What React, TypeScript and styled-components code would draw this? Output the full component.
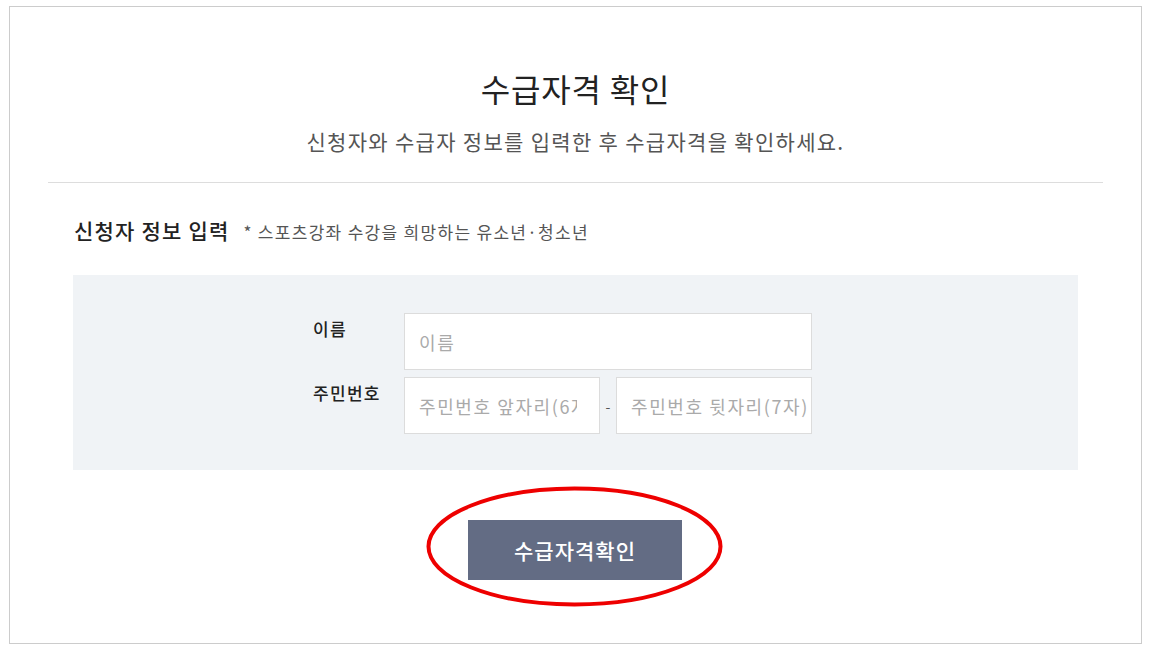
import React from "react";
import styled, { createGlobalStyle } from "styled-components";

const Global = createGlobalStyle`
  html, body { margin: 0; padding: 0; background: #fff; }
  body { font-family: "Noto Sans CJK KR", "Noto Sans", sans-serif; }
  * { box-sizing: border-box; }
`;

const Frame = styled.div`
  width: 1133px;
  height: 638px;
  margin: 6px 0 0 9px;
  border: 1px solid #cccccc;
  display: flex;
  flex-direction: column;
`;

const Header = styled.header`
  display: flex;
  flex-direction: column;
  align-items: center;
  padding-top: 60px;
  margin: 0 38px;
  padding-bottom: 26px;
  border-bottom: 1px solid #dddddd;
`;

const Title = styled.h1`
  margin: 0;
  font-size: 32px;
  line-height: 42px;
  font-weight: 400;
  letter-spacing: 0.8px;
  color: #222;
`;

const Subtitle = styled.p`
  margin: 17px 0 0;
  font-size: 21px;
  line-height: 30px;
  font-weight: 400;
  letter-spacing: 1.3px;
  color: #555;
`;

const Section = styled.section`
  padding: 34px 63px 0;
`;

const SectionHead = styled.div`
  display: flex;
  align-items: baseline;
  gap: 14px;
  padding-left: 1px;
  height: 26px;
`;

const SectionTitle = styled.h2`
  margin: 0;
  font-size: 21px;
  line-height: 26px;
  font-weight: 500;
  letter-spacing: 1.2px;
  color: #222;
`;

const Note = styled.span`
  font-size: 17px;
  letter-spacing: 1.3px;
  color: #555;
`;

const Panel = styled.div`
  margin-top: 32px;
  background: #f0f3f6;
  padding: 38px 0 36px 240px;
`;

const FormGrid = styled.div`
  display: grid;
  grid-template-columns: 91px 408px;
  row-gap: 7px;
`;

const Label = styled.label`
  font-size: 17px;
  font-weight: 500;
  letter-spacing: 1.3px;
  color: #222;
  line-height: 24px;
  padding-top: 4px;
`;

const Field = styled.input<{ $w?: number; $padR?: number }>`
  width: ${(p) => (p.$w ? `${p.$w}px` : "100%")};
  height: 57px;
  border: 1px solid #dcdcdc;
  background: #fff;
  padding: 0 ${(p) => p.$padR ?? 14}px 0 14px;
  font-family: inherit;
  font-size: 18px;
  letter-spacing: 1.6px;
  color: #333;
  outline: none;
  &::placeholder { color: #aaa; }
`;

const SplitRow = styled.div`
  display: flex;
  align-items: center;
`;

const Dash = styled.span`
  width: 17px;
  text-align: center;
  color: #555;
  font-size: 14px;
`;

const ButtonArea = styled.div`
  display: flex;
  justify-content: center;
  padding-top: 50px;
`;

const ButtonWrap = styled.div`
  position: relative;
  margin-left: -1px;
`;

const Button = styled.button`
  width: 214px;
  height: 60px;
  border: none;
  background: #636c84;
  color: #fff;
  font-family: inherit;
  font-size: 21px;
  font-weight: 500;
  letter-spacing: 1px;
  cursor: pointer;
`;

const Highlight = styled.svg`
  position: absolute;
  left: -42px;
  top: -34px;
  width: 297px;
  height: 121px;
  pointer-events: none;
  overflow: visible;
`;

export default function App() {
  return (
    <>
      <Global />
      <Frame>
        <Header>
          <Title>수급자격 확인</Title>
          <Subtitle>신청자와 수급자 정보를 입력한 후 수급자격을 확인하세요.</Subtitle>
        </Header>
        <Section>
          <SectionHead>
            <SectionTitle>신청자 정보 입력</SectionTitle>
            <Note>* 스포츠강좌 수강을 희망하는 유소년·청소년</Note>
          </SectionHead>
          <Panel>
            <FormGrid>
              <Label>이름</Label>
              <Field placeholder="이름" />
              <Label>주민번호</Label>
              <SplitRow>
                <Field $w={196} $padR={22} placeholder="주민번호 앞자리(6자)" />
                <Dash>-</Dash>
                <Field $w={196} $padR={2} placeholder="주민번호 뒷자리(7자)" />
              </SplitRow>
            </FormGrid>
          </Panel>
          <ButtonArea>
            <ButtonWrap>
              <Button>수급자격확인</Button>
              <Highlight viewBox="0 0 297 121">
                <ellipse cx="148.5" cy="60.5" rx="146" ry="58" fill="none" stroke="#ee0000" strokeWidth="4" />
              </Highlight>
            </ButtonWrap>
          </ButtonArea>
        </Section>
      </Frame>
    </>
  );
}
